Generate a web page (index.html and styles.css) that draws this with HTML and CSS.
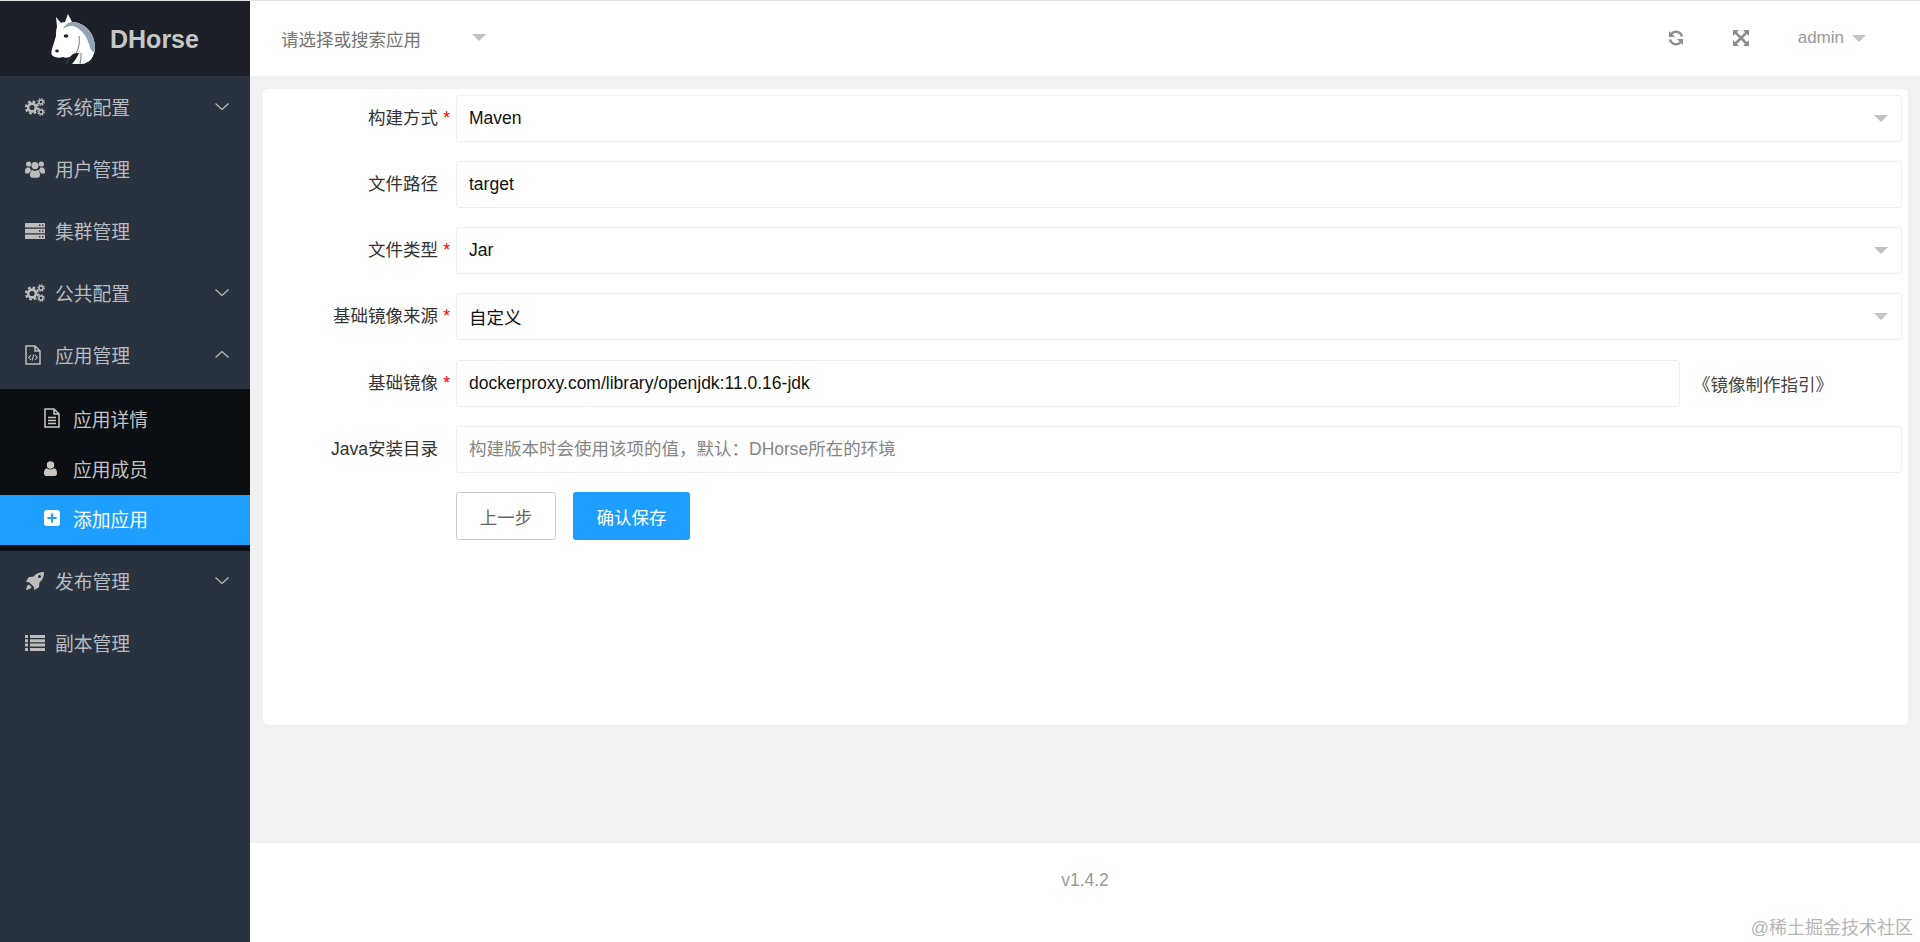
FILE: index.html
```html
<!DOCTYPE html>
<html lang="zh-CN">

<head>
  <meta charset="UTF-8" />
  <title>DHorse</title>
  <link rel="stylesheet" href="styles.css">
</head>

<body>

  <svg class="defs" width="0" height="0">
    <symbol id="i-cogs" viewBox="0 0 20 18">
      <circle cx="7" cy="9.5" r="3.9" fill="none" stroke="currentColor" stroke-width="2.6" />
      <circle cx="7" cy="9.5" r="6" fill="none" stroke="currentColor" stroke-width="2.2" stroke-dasharray="2.6 2.1" />
      <circle cx="16" cy="4" r="2" fill="none" stroke="currentColor" stroke-width="1.4" />
      <circle cx="16" cy="4" r="3.2" fill="none" stroke="currentColor" stroke-width="1.3" stroke-dasharray="1.4 1.1" />
      <circle cx="16" cy="14" r="2" fill="none" stroke="currentColor" stroke-width="1.4" />
      <circle cx="16" cy="14" r="3.2" fill="none" stroke="currentColor" stroke-width="1.3" stroke-dasharray="1.4 1.1" />
    </symbol>
    <symbol id="i-users" viewBox="0 0 20 18">
      <circle cx="3.6" cy="4" r="2.6" fill="currentColor" />
      <circle cx="16.4" cy="4" r="2.6" fill="currentColor" />
      <circle cx="10" cy="5.6" r="3.6" fill="currentColor" />
      <path d="M0 12c0-3 .8-4.600 2.600-4.600h2.200c.2 1.300 1 2.300 1.800 3-1.500.6-2.300 1.800-2.500 3.200H1.200C.4 13.600 0 13 0 12zM20 12c0-3-.8-4.600-2.600-4.600h-2.200c-.2 1.300-1 2.300-1.800 3 1.500.6 2.300 1.800 2.500 3.200h3.100c.6 0 1-.6 1-1.600z" fill="currentColor" />
      <path d="M5 15c0-3 1-5 2.800-5 .6.500 1.300.9 2.200.9s1.600-.4 2.200-.9C14 10 15 12 15 15c0 1.800-1 2.800-2.500 2.800h-5C6 17.800 5 16.800 5 15z" fill="currentColor" />
    </symbol>
    <symbol id="i-server" viewBox="0 0 20 16">
      <path fill-rule="evenodd" d="M.5 0h19a.5.500 0 0 1 .5.500V4a.5.500 0 0 1-.5.500H.5A.5.500 0 0 1 0 4V.5A.5.500 0 0 1 .5 0zM14 1.500V3h1.500V1.500zM17 1.500V3h1.500V1.500z" fill="currentColor" />
      <path fill-rule="evenodd" d="M.5 5.700h19a.5.500 0 0 1 .5.500v3.600a.5.500 0 0 1-.5.500H.5a.5.500 0 0 1-.5-.5V6.200a.5.500 0 0 1 .5-.5zM14 7.200v1.500h1.500V7.200zM17 7.200v1.500h1.500V7.200z" fill="currentColor" />
      <path fill-rule="evenodd" d="M.5 11.400h19a.5.500 0 0 1 .5.500v3.600a.5.500 0 0 1-.5.500H.5a.5.500 0 0 1-.5-.5v-3.600a.5.500 0 0 1 .5-.5zM14 12.900v1.500h1.500v-1.500zM17 12.900v1.500h1.500v-1.500z" fill="currentColor" />
    </symbol>
    <symbol id="i-file-code" viewBox="0 0 16 20">
      <path d="M1 1h9l5 5v13H1zM10 1v5h5" fill="none" stroke="currentColor" stroke-width="1.500" />
      <path d="M6 10l-2.300 2.500L6 15M10 10l2.300 2.500L10 15M8.800 9.500l-1.600 6" fill="none" stroke="currentColor" stroke-width="1.100" />
    </symbol>
    <symbol id="i-file-text" viewBox="0 0 16 20">
      <path d="M1 1h9l5 5v13H1zM10 1v5h5" fill="none" stroke="currentColor" stroke-width="1.500" />
      <path d="M4 9.500h8M4 12.500h8M4 15.500h8" fill="none" stroke="currentColor" stroke-width="1.500" />
    </symbol>
    <symbol id="i-user" viewBox="0 0 14 16">
      <circle cx="7" cy="4.200" r="4" fill="currentColor" />
      <path d="M0 13c0-3 1-5.300 3.200-5.300C4.200 8.500 5.500 9 7 9s2.800-.5 3.800-1.300C13 7.700 14 10 14 13c0 1.800-1 3-2.600 3H2.600C1 16 0 14.800 0 13z" fill="currentColor" />
    </symbol>
    <symbol id="i-plus" viewBox="0 0 16 16">
      <path fill-rule="evenodd" d="M3 0h10a3 3 0 0 1 3 3v10a3 3 0 0 1-3 3H3a3 3 0 0 1-3-3V3a3 3 0 0 1 3-3zM7 3.500V7H3.500v2H7v3.500h2V9h3.500V7H9V3.500z" fill="currentColor" />
    </symbol>
    <symbol id="i-rocket" viewBox="0 0 18 18">
      <path fill-rule="evenodd" d="M18 0c.2 4-1 7.500-4.500 10.500l-.5 4.800L8.500 18l-.8-3.200-4.300-4.300L0 9.700l2.700-4.500 4.800-.6C10.500 1 14 0 18 0zM13.500 3a1.500 1.500 0 1 0 0 3 1.500 1.500 0 0 0 0-3z" fill="currentColor" />
      <path d="M3 12.500c-1.300.4-2.500 2-3 5.500 3.500-.5 5.100-1.700 5.500-3z" fill="currentColor" />
    </symbol>
    <symbol id="i-list" viewBox="0 0 20 16">
      <path d="M0 0h3v3H0zM5 0h15v3H5zM0 4.300h3v3H0zM5 4.300h15v3H5zM0 8.600h3v3H0zM5 8.600h15v3H5zM0 13h3v3H0zM5 13h15v3H5z" fill="currentColor" />
    </symbol>
  </svg>

  <div class="app">

    <aside class="sidebar">
      <div class="logo">
        <svg class="logo-horse" width="44" height="50" viewBox="0 0 44 50">
          <path d="M17 0l4 8c12 0 23 11 23 25 0 9-5 17-14 17H15l5-8c-3 2-6 2-8 1-3 1-7 1-10-1-2-1-2-4-1-7l4-13c0-3 0-6 1-9L5 3l5 6c1-1 3-1 4-1z" fill="#fff" />
          <path d="M20.500 8C32 8 44 19 44 33c0 2-.2 4-.8 6-1.400-1-3-3-4.200-5-1-5-3-10-6-14-3-4-7-7-11-8-4-.5-7 .5-10 3 2-4 4-6 8-7z" fill="#8fa4b2" />
          <ellipse cx="15" cy="22" rx="2.300" ry="1.700" fill="#1a1f28" />
          <ellipse cx="6" cy="37" rx="1.800" ry="1.400" fill="#1a1f28" />
          <path d="M20 42c2-3 5-3 8-3-2 4-4 8-7 11h-6z" fill="#1a1f28" />
          <path d="M28 22c1 6 0 12-3 17M30 39c0 4 0 7-1 11" fill="none" stroke="#4d5a66" stroke-width=".8" />
        </svg>
        <span class="logo-text">DHorse</span>
      </div>

      <nav class="menu">
        <a class="menu-item"><svg class="ico"><use href="#i-cogs" /></svg><span>系统配置</span><svg class="chev" viewBox="0 0 14 7"><path d="M.5.500L7 6.500 13.500.500" /></svg></a>
        <a class="menu-item"><svg class="ico"><use href="#i-users" /></svg><span>用户管理</span></a>
        <a class="menu-item"><svg class="ico"><use href="#i-server" /></svg><span>集群管理</span></a>
        <a class="menu-item"><svg class="ico"><use href="#i-cogs" /></svg><span>公共配置</span><svg class="chev" viewBox="0 0 14 7"><path d="M.5.500L7 6.500 13.500.500" /></svg></a>
        <a class="menu-item"><svg class="ico ico-file"><use href="#i-file-code" /></svg><span>应用管理</span><svg class="chev" viewBox="0 0 14 7"><path d="M.5 6.500L7 .5l6.500 6" /></svg></a>
        <div class="submenu">
          <a class="sub-item"><svg class="ico-sub"><use href="#i-file-text" /></svg><span>应用详情</span></a>
          <a class="sub-item"><svg class="ico-sub ico-user"><use href="#i-user" /></svg><span>应用成员</span></a>
          <a class="sub-item active"><svg class="ico-sub"><use href="#i-plus" /></svg><span>添加应用</span></a>
        </div>
        <a class="menu-item"><svg class="ico"><use href="#i-rocket" /></svg><span>发布管理</span><svg class="chev" viewBox="0 0 14 7"><path d="M.5.500L7 6.500 13.500.500" /></svg></a>
        <a class="menu-item"><svg class="ico"><use href="#i-list" /></svg><span>副本管理</span></a>
      </nav>
    </aside>

    <main class="main">
      <header class="topbar">
        <div class="app-select">
          <span>请选择或搜索应用</span>
          <i class="caret"></i>
        </div>
        <div class="topbar-right">
          <svg class="top-ico" viewBox="0 0 16 16">
            <path d="M14 6.500A6.200 6.200 0 0 0 3.200 4" fill="none" stroke="currentColor" stroke-width="2.400" />
            <path d="M1 1v6h6z" fill="currentColor" />
            <path d="M2 9.500A6.200 6.200 0 0 0 12.800 12" fill="none" stroke="currentColor" stroke-width="2.400" />
            <path d="M15 15V9H9z" fill="currentColor" />
          </svg>
          <svg class="top-ico" viewBox="0 0 16 16">
            <path d="M0 0h6L0 6zM16 0v6l-6-6zM0 16v-6l6 6zM16 16h-6l6-6z" fill="currentColor" />
            <path d="M2.500 2.500l11 11M13.500 2.500l-11 11" fill="none" stroke="currentColor" stroke-width="2.600" />
          </svg>
          <span class="user">admin</span>
          <i class="caret"></i>
        </div>
      </header>

      <section class="content">
        <form class="card">
          <div class="form-row">
            <label class="form-label required">构建方式</label>
            <div class="select"><span>Maven</span><i class="caret"></i></div>
          </div>
          <div class="form-row">
            <label class="form-label">文件路径</label>
            <input class="input" value="target">
          </div>
          <div class="form-row">
            <label class="form-label required">文件类型</label>
            <div class="select"><span>Jar</span><i class="caret"></i></div>
          </div>
          <div class="form-row row-source">
            <label class="form-label required">基础镜像来源</label>
            <div class="select"><span>自定义</span><i class="caret"></i></div>
          </div>
          <div class="form-row">
            <label class="form-label required">基础镜像</label>
            <div class="input-with-link">
              <input class="input" value="dockerproxy.com/library/openjdk:11.0.16-jdk">
              <a class="guide-link">《镜像制作指引》</a>
            </div>
          </div>
          <div class="form-row">
            <label class="form-label">Java安装目录</label>
            <input class="input" placeholder="构建版本时会使用该项的值，默认：DHorse所在的环境">
          </div>
          <div class="form-row">
            <span></span>
            <div class="btn-row">
              <button type="button" class="btn btn-plain">上一步</button>
              <button type="button" class="btn btn-primary">确认保存</button>
            </div>
          </div>
        </form>
      </section>

      <footer class="footer">v1.4.2</footer>
    </main>
  </div>

  <div class="watermark">@稀土掘金技术社区</div>

</body>

</html>
```

FILE: styles.css
```css
* {
  box-sizing: border-box;
}

body {
  margin: 0;
  font-family: "Liberation Sans", "Noto Sans CJK SC", sans-serif;
  font-size: 17.5px;
  color: #333;
  background: #fff;
}

.defs {
  position: absolute;
}

.app {
  display: flex;
  height: 942px;
  border-top: 1px solid #e2e2e2;
  overflow: hidden;
}

/* sidebar */
.sidebar {
  width: 250px;
  flex-shrink: 0;
  background: #29333f;
}

.logo {
  height: 75px;
  display: flex;
  align-items: center;
  padding-left: 51px;
  gap: 15px;
  background: #1a1f28;
}

.logo-text {
  padding-top: 2px;
  font-size: 25px;
  font-weight: bold;
  color: #c6c6c6;
}

.menu-item {
  height: 62px;
  display: flex;
  align-items: center;
  padding-left: 25px;
  padding-bottom: 1px;
  color: #b9bcc0;
  font-size: 18.75px;
}

.ico {
  width: 20px;
  height: 18px;
  margin-right: 10px;
  color: #bdbdbd;
}

.ico-file {
  width: 16px;
  height: 20px;
  margin-right: 14px;
}

.chev {
  width: 14px;
  height: 7px;
  margin-left: auto;
  margin-right: 21px;
  fill: none;
  stroke: #b9bcc0;
  stroke-width: 1.200;
}

.submenu {
  margin: 3px 0 -1px;
  padding: 6px 0;
  background: #0b0f13;
}

.sub-item {
  height: 50px;
  display: flex;
  align-items: center;
  padding-left: 44px;
  padding-bottom: 4px;
  color: #c2c2c2;
  font-size: 18.75px;
}

.ico-sub {
  width: 16px;
  height: 20px;
  margin-right: 13px;
  color: #c9c6c0;
}

.ico-user {
  width: 13px;
  height: 15px;
  margin-right: 16px;
}

.sub-item.active {
  background: #1e9fff;
  color: #fff;
}

.sub-item.active .ico-sub {
  color: #fff;
}

/* header */
.main {
  flex: 1;
  min-width: 0;
  display: flex;
  flex-direction: column;
}

.topbar {
  height: 75px;
  flex-shrink: 0;
  display: flex;
  align-items: center;
  justify-content: space-between;
  padding: 0 54px 0 31px;
}

.app-select {
  display: flex;
  align-items: center;
  color: #757575;
}

.app-select .caret {
  margin-left: 51px;
  margin-top: -2px;
}

.caret {
  display: block;
  width: 0;
  height: 0;
  border-left: 7px solid transparent;
  border-right: 7px solid transparent;
  border-top: 7px solid #c2c2c2;
}

.topbar-right {
  display: flex;
  align-items: center;
  color: #999;
}

.top-ico {
  width: 16px;
  height: 16px;
  margin-right: 49px;
  margin-top: -2px;
  color: #8e8e8e;
}

.user {
  margin-right: 8px;
  margin-top: -2px;
  font-size: 17px;
}

.content {
  flex: 1;
  padding: 13px 12px 0 13px;
  background: #f1f1f1;
}

.card {
  height: 636px;
  padding: 6px 6px 0 0;
  background: #fff;
  border-radius: 5px;
}

.form-row {
  display: grid;
  grid-template-columns: 193px 1fr;
  margin-bottom: 19px;
}

.row-source {
  margin-bottom: 20px;
}

.form-label {
  position: relative;
  padding-right: 18px;
  line-height: 46px;
  text-align: right;
}

.form-label.required::after {
  content: "*";
  position: absolute;
  right: 6px;
  top: 0;
  color: #f00;
}

.select,
.input {
  width: 100%;
  height: 47px;
  border: 1px solid #eee;
  border-radius: 3px;
  padding: 0 13px 0 12px;
  font: inherit;
  color: #111;
  background: #fff;
  outline: none;
}

.select {
  display: flex;
  align-items: center;
  justify-content: space-between;
}

.input::placeholder {
  color: #858585;
}

.input-with-link {
  display: flex;
  align-items: center;
}

.guide-link {
  flex: 0 0 222px;
  padding-left: 13px;
  color: #444;
}

.btn-row {
  display: flex;
  gap: 17px;
}

.btn {
  height: 48px;
  border-radius: 3px;
  font: inherit;
  cursor: pointer;
}

.btn-plain {
  width: 100px;
  background: #fff;
  border: 1px solid #c9c9c9;
  color: #666;
}

.btn-primary {
  width: 117px;
  background: #1e9fff;
  border: none;
  color: #fff;
}

.footer {
  height: 99px;
  flex-shrink: 0;
  display: flex;
  align-items: center;
  justify-content: center;
  padding-bottom: 24px;
  color: #999;
}

.watermark {
  position: absolute;
  right: 7px;
  bottom: 3px;
  font-size: 18px;
  color: #b5b5b5;
}
```
